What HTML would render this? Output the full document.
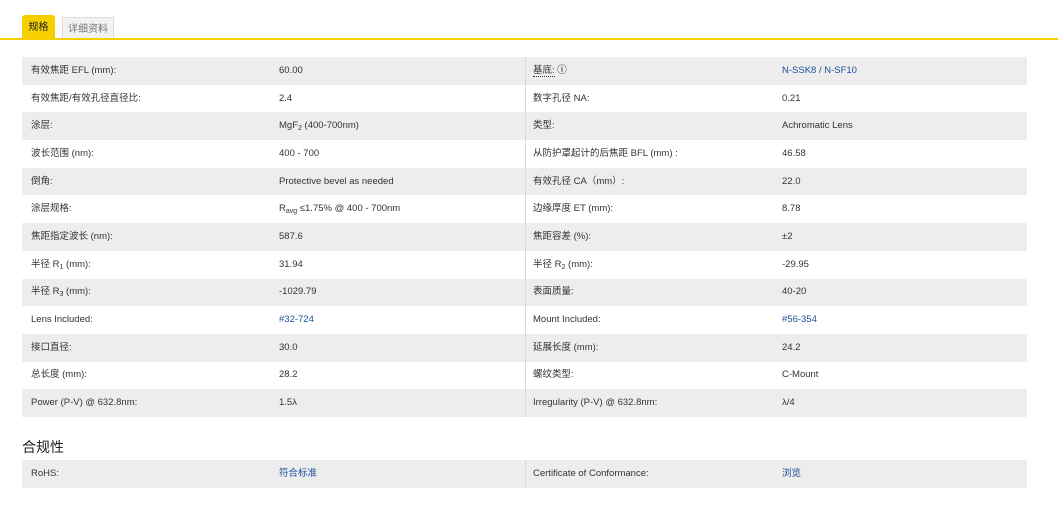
<!DOCTYPE html>
<html><head><meta charset="utf-8"><style>
body{margin:0;width:1058px;height:516px;background:#fff;font-family:"Liberation Sans","Noto Sans CJK SC",sans-serif;color:#333;position:relative;overflow:hidden}
.tab1{position:absolute;left:22px;top:15px;width:33px;height:24px;background:#f5cf00;border-radius:3px 3px 0 0;font-size:10px;line-height:26px;text-align:center;color:#222}
.tab2{position:absolute;left:62px;top:17px;width:52px;height:22px;background:#f2f2f2;border:1px solid #ddd;border-bottom:none;font-size:10px;line-height:24px;text-align:center;color:#777;box-sizing:border-box}
.line{position:absolute;left:0;top:38px;width:1058px;height:2px;background:#f5cf00}
table{position:absolute;left:22px;width:1005px;border-collapse:collapse;font-size:9.5px;table-layout:fixed}
td{height:27.7px;padding:0;vertical-align:middle;line-height:12px;overflow:hidden}
td>span{display:inline-block;height:12px;line-height:12px;vertical-align:middle}
tr:nth-child(odd) td{background:#ededed}
td.a{width:248px;padding-left:9px}
td.b{width:246px;border-right:1px solid #d8d8d8}
td.c{width:249px;padding-left:7px}
a{color:#1d4f9c;text-decoration:none}
h3{position:absolute;left:22px;top:437px;margin:0;font-size:14px;font-weight:normal;color:#222}
sub{font-size:7px;vertical-align:baseline;position:relative;top:2px;line-height:0}
</style></head><body>
<div class="tab1">规格</div><div class="tab2">详细资料</div><div class="line"></div>
<table style="top:57px">
<tr><td class="a">有效焦距 EFL (mm):</td><td class="b">60.00</td><td class="c"><u style="text-decoration:none;border-bottom:1px dotted #333">基底:</u> <b>ⓘ</b></td><td><a>N-SSK8 / N-SF10</a></td></tr>
<tr><td class="a">有效焦距/有效孔径直径比:</td><td class="b">2.4</td><td class="c">数字孔径 NA:</td><td>0.21</td></tr>
<tr><td class="a">涂层:</td><td class="b">MgF<sub>2</sub> (400-700nm)</td><td class="c">类型:</td><td>Achromatic Lens</td></tr>
<tr><td class="a">波长范围 (nm):</td><td class="b">400 - 700</td><td class="c">从防护罩起计的后焦距 BFL (mm) :</td><td>46.58</td></tr>
<tr><td class="a">倒角:</td><td class="b">Protective bevel as needed</td><td class="c">有效孔径 CA（mm）:</td><td>22.0</td></tr>
<tr><td class="a">涂层规格:</td><td class="b">R<sub>avg</sub> ≤1.75% @ 400 - 700nm</td><td class="c">边缘厚度 ET (mm):</td><td>8.78</td></tr>
<tr><td class="a">焦距指定波长 (nm):</td><td class="b">587.6</td><td class="c">焦距容差 (%):</td><td>±2</td></tr>
<tr><td class="a">半径 R<sub>1</sub> (mm):</td><td class="b">31.94</td><td class="c">半径 R<sub>2</sub> (mm):</td><td>-29.95</td></tr>
<tr><td class="a">半径 R<sub>3</sub> (mm):</td><td class="b">-1029.79</td><td class="c">表面质量:</td><td>40-20</td></tr>
<tr><td class="a">Lens Included:</td><td class="b"><a>#32-724</a></td><td class="c">Mount Included:</td><td><a>#56-354</a></td></tr>
<tr><td class="a">接口直径:</td><td class="b">30.0</td><td class="c">延展长度 (mm):</td><td>24.2</td></tr>
<tr><td class="a">总长度 (mm):</td><td class="b">28.2</td><td class="c">螺纹类型:</td><td>C-Mount</td></tr>
<tr><td class="a">Power (P-V) @ 632.8nm:</td><td class="b">1.5λ</td><td class="c">Irregularity (P-V) @ 632.8nm:</td><td>λ/4</td></tr>
</table>
<h3>合规性</h3>
<table style="top:460px">
<tr><td class="a">RoHS:</td><td class="b"><a>符合标准</a></td><td class="c">Certificate of Conformance:</td><td><a>浏览</a></td></tr>
</table>
</body></html>
